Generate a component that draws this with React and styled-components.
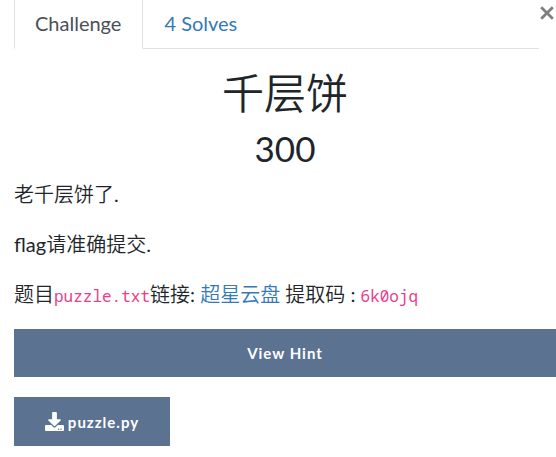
import React from "react";
import styled, { createGlobalStyle } from "styled-components";
import { FaDownload } from "react-icons/fa";

const Global = createGlobalStyle`
  * { box-sizing: border-box; }
  body {
    margin: 0;
    background: #fff;
    color: #212529;
    font: 400 20px/30px Lato, "Noto Sans CJK SC DemiLight", "Noto Sans CJK SC", sans-serif;
    overflow-x: hidden;
  }
`;
const Dialog = styled.main`
  position: relative;
  padding: 0 0 11px 14px;
`;
const Close = styled.button`
  position: absolute;
  top: 4px;
  right: 0;
  width: 18px;
  height: 18px;
  padding: 0;
  border: 0;
  background: none;
  color: #7f7f7f;
`;
const Tabs = styled.nav`
  display: flex;
  height: 49px;
  margin-right: 17px;
  border-bottom: 1px solid #dee2e6;
`;
const Tab = styled.a`
  height: 49px;
  padding: 8px 21px 10px 20px;
  border: 1px solid;
  border-top: 0;
  border-color: ${(p) => (p.$active ? "#dee2e6 #dee2e6 #fff" : "transparent")};
  color: ${(p) => (p.$active ? "#495057" : "#337ab7")};
  text-decoration: none;
`;
const Title = styled.h2`
  margin: 19px 0 9px;
  font-size: 42px;
  line-height: 50px;
  font-weight: 400;
  text-align: center;
`;
const Value = styled.h3`
  margin: 0 0 10px;
  font-size: 35px;
  line-height: 42px;
  font-weight: 400;
  text-align: center;
`;
const Text = styled.p`
  margin: 0 0 20px;
`;
const Link = styled.a`
  color: #337ab7;
  text-decoration: none;
`;
const Code = styled.code`
  color: #e83e8c;
  font: 16px/16px "Noto Sans Mono", "DejaVu Sans Mono", monospace;
`;
const Button = styled.button`
  display: flex;
  align-items: center;
  justify-content: center;
  gap: 4px;
  width: ${(p) => (p.$wide ? "100%" : "156px")};
  height: ${(p) => (p.$wide ? "48px" : "49px")};
  margin-bottom: 20px;
  border: 0;
  background: #5b7290;
  color: #fff;
  font: 700 15px/24px Lato, sans-serif;
  letter-spacing: 1px;
`;

export default function App() {
  return (
    <Dialog>
      <Global />
      <Close aria-label="Close">
        <svg width="18" height="18" viewBox="0 0 18 18" fill="none" stroke="currentColor" strokeWidth="2.8">
          <path d="M3.2 3.2l11.6 11.6M14.8 3.2L3.2 14.8" />
        </svg>
      </Close>
      <Tabs>
        <Tab href="#challenge" $active>Challenge</Tab>
        <Tab href="#solves">4 Solves</Tab>
      </Tabs>
      <Title>千层饼</Title>
      <Value>300</Value>
      <Text>老千层饼了.</Text>
      <Text>flag请准确提交.</Text>
      <Text>
        题目<Code>puzzle.txt</Code>链接: <Link href="#pan">超星云盘</Link> 提取码 : <Code>6k0ojq</Code>
      </Text>
      <Button $wide>View Hint</Button>
      <Button><FaDownload size={19} />puzzle.py</Button>
    </Dialog>
  );
}
